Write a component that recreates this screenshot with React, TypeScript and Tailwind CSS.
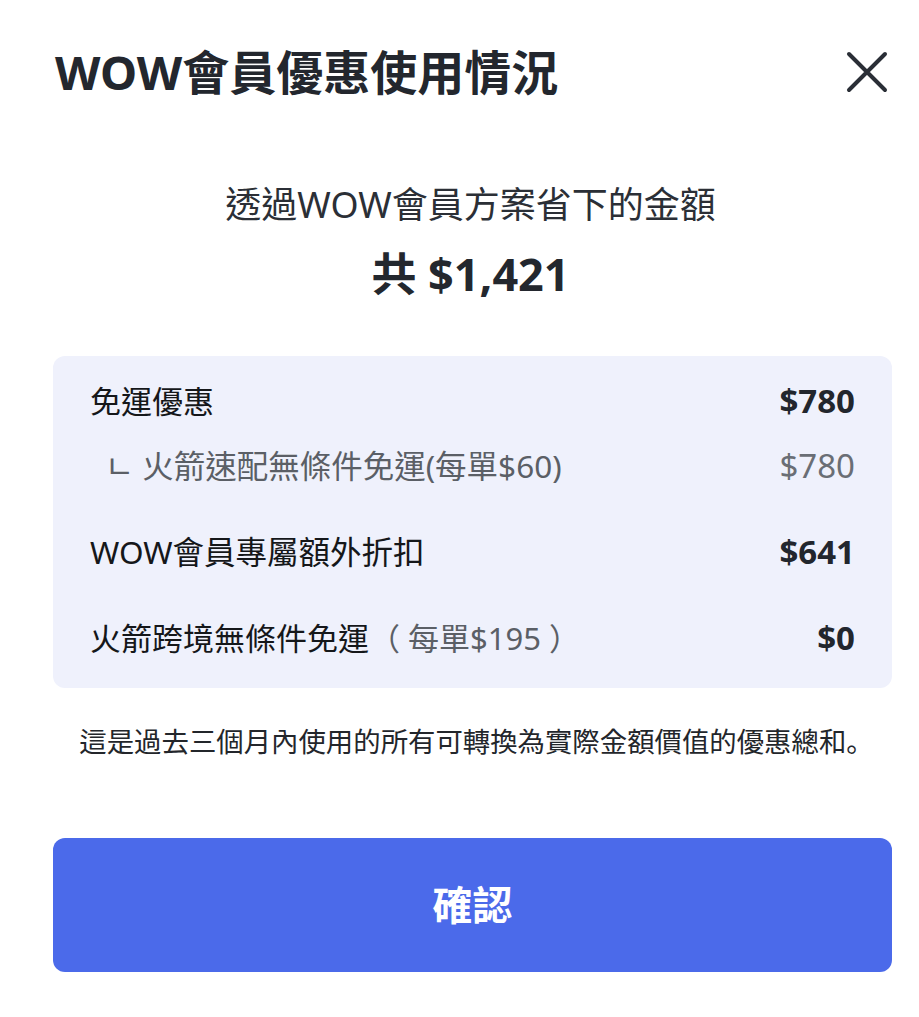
import React from 'react';

const font = { fontFamily: '"Noto Sans", "Noto Sans CJK TC", sans-serif' };

const Row: React.FC<{ label: React.ReactNode; amount: string; sub?: boolean }> = ({ label, amount, sub }) => (
    <div className={`flex items-center justify-between leading-[40px] ${sub ? 'pl-[15px]' : ''}`}>
        <span className={sub ? 'text-[#5b5f66]' : 'text-[#15171a]'}>{label}</span>
        <span className={`text-[33px] ${sub ? 'text-[#6a6e75]' : 'font-bold text-[#22262d]'}`}>{amount}</span>
    </div>
);

const App: React.FC = () => {
    return (
        <div className="min-h-[1017px] w-[919px] bg-white pl-[53px] pr-[27px] pt-[44px]" style={font}>
            <div className="flex items-center justify-between">
                <h1 className="text-[47px] leading-[56px] font-bold text-[#23272e] pl-[2px]">WOW會員優惠使用情況</h1>
                <button className="mr-[3px] flex h-[44px] w-[44px] items-center justify-center">
                    <svg width="42" height="42" viewBox="0 0 42 42" fill="none" stroke="#2a2e36" strokeWidth="4" strokeLinecap="round">
                        <path d="M3 3L39 39M39 3L3 39" />
                    </svg>
                </button>
            </div>

            <div className="mt-[83px] flex flex-col items-center pr-[4px]">
                <p className="text-[36px] leading-[44px] text-[#2b2f36]">透過WOW會員方案省下的金額</p>
                <p className="mt-[20px] text-[45px] leading-[54px] font-bold text-[#23272e]">共 $1,421</p>
            </div>

            <div className="mt-[55px] rounded-[12px] bg-[#eff1fc] px-[37px] pt-[25px] pb-[30px] text-[31px]">
                <div className="flex flex-col gap-[25px]">
                    <Row label="免運優惠" amount="$780" />
                    <Row sub label={<span className="text-[31.5px]">ㄴ 火箭速配無條件免運(每單$60)</span>} amount="$780" />
                </div>
                <div className="mt-[46px] flex flex-col gap-[46px]">
                    <Row label={<span className="text-[31.5px]">WOW會員專屬額外折扣</span>} amount="$641" />
                    <Row
                        label={<>火箭跨境無條件免運<span className="text-[#5b5f66]">（ 每單$195 ）</span></>}
                        amount="$0"
                    />
                </div>
            </div>

            <p
                className="mt-[36px] pl-[8px] text-center text-[27.4px] leading-[36px] text-[#23262b]"
                style={{ fontFamily: '"Noto Sans", "Noto Sans CJK JP", sans-serif' }}
            >
                這是過去三個月內使用的所有可轉換為實際金額價值的優惠總和。
            </p>

            <button className="mt-[78px] flex h-[134px] w-full items-center justify-center rounded-[12px] bg-[#4b6aea] text-[40px] font-bold text-white">
                確認
            </button>
        </div>
    );
};

export default App;
